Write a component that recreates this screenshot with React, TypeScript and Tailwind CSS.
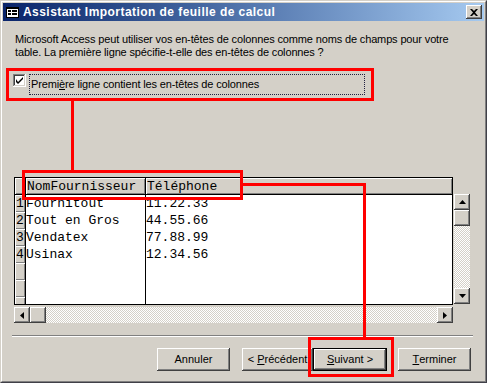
import React from "react";

const raised =
  "bg-[#d4d0c8] shadow-[inset_-1px_-1px_0_#404040,inset_1px_1px_0_#ffffff,inset_-2px_-2px_0_#808080,inset_2px_2px_0_#d4d0c8]";
const thinRaised = "bg-[#d4d0c8] shadow-[inset_1px_1px_0_#ffffff,inset_-1px_-1px_0_#808080]";
const track = "bg-[repeating-conic-gradient(#d4d0c8_0_25%,#ffffff_0_50%)] bg-[length:2px_2px]";

const rows = [
  ["Fournitout", "11.22.33"],
  ["Tout en Gros", "44.55.66"],
  ["Vendatex", "77.88.99"],
  ["Usinax", "12.34.56"],
];

function Arrow({ dir }: { dir: "up" | "down" | "left" | "right" }) {
  const pts = {
    up: "0,4 7,4 3.5,0",
    down: "0,0 7,0 3.5,4",
    left: "4,0 4,7 0,3.5",
    right: "0,0 0,7 4,3.5",
  }[dir];
  const v = dir === "up" || dir === "down";
  return (
    <svg width={v ? 7 : 4} height={v ? 4 : 7} viewBox={v ? "0 0 7 4" : "0 0 4 7"}>
      <polygon points={pts} fill="#000" />
    </svg>
  );
}

function Btn({ w, children, def }: { w: string; children: React.ReactNode; def?: boolean }) {
  return (
    <div className={`${w} h-[23px] ${def ? "border border-black" : ""}`}>
      <div className={`${raised} h-full flex items-center justify-center`}>{children}</div>
    </div>
  );
}

export default function App() {
  return (
    <div className="relative w-[487px] h-[383px] bg-[#d4d0c8] border border-t-[#d4d0c8] border-l-[#d4d0c8] border-r-[#404048] border-b-[#404048] font-['Liberation_Sans',Arial,sans-serif] text-[11px] text-black overflow-hidden">
      <div className="h-full border border-t-white border-l-white border-r-[#808080] border-b-[#808080] p-px flex flex-col">
        {/* title bar */}
        <div className="h-[18px] flex items-center bg-linear-to-r from-[#0a246a] to-[#a6caf0]">
          <svg width="13" height="11" viewBox="0 0 13 11" className="ml-[3px]">
            <rect x="0.5" y="0.5" width="12" height="10" fill="#fff" stroke="#000" />
            <rect x="0" y="0" width="13" height="2" fill="#000" />
            <rect x="2" y="3" width="3" height="2" fill="#000" />
            <rect x="6" y="3" width="5" height="2" fill="#000" />
            <rect x="2" y="6" width="3" height="2" fill="#000" />
            <rect x="6" y="6" width="5" height="2" fill="#000" />
          </svg>
          <span className="ml-[4px] text-white font-bold text-[12px] tracking-[0.45px]">
            Assistant Importation de feuille de calcul
          </span>
          <div className={`${raised} ml-auto mr-[2px] w-[16px] h-[14px] flex items-center justify-center`}>
            <svg width="8" height="7" viewBox="0 0 8 7">
              <path d="M0 0h2l2 2 2-2h2L5 3.5 8 7H6L4 5 2 7H0l3-3.5z" fill="#000" />
            </svg>
          </div>
        </div>

        {/* client */}
        <div className="flex-1 flex flex-col">
          <p className="mt-[12px] ml-[12px] leading-[13px] tracking-[-0.14px]">
            Microsoft Access peut utiliser vos en-têtes de colonnes comme noms de champs pour votre
            <br />
            table. La première ligne spécifie-t-elle des en-têtes de colonnes ?
          </p>

          <div className="mt-[15px] ml-[10px] flex items-start">
            <div className="w-[13px] h-[13px] bg-white shadow-[inset_-1px_-1px_0_#ffffff,inset_1px_1px_0_#808080,inset_-2px_-2px_0_#d4d0c8,inset_2px_2px_0_#404040] flex items-center justify-center">
              <svg width="7" height="7" viewBox="0 0 7 7">
                <path d="M0 2v3l2 2 5-5V-0L2 5z" fill="#000" />
              </svg>
            </div>
            <div className="ml-[3px] w-[336px] h-[21px] border border-dotted border-[#202040] pl-px flex items-center tracking-[-0.14px]">
              <span>
                Premi<span className="underline">è</span>re ligne contient les en-têtes de colonnes
              </span>
            </div>
          </div>

          {/* grid */}
          <div className="mt-[82px] ml-[11px] flex items-start">
            <div className="w-[439px] h-[128px] border border-black bg-white flex font-['Liberation_Mono','Courier_New',monospace] text-[13px] leading-[17px] overflow-hidden">
              <div className="w-[11px] border-r border-black flex flex-col shrink-0">
                <div className={`${thinRaised} h-[17px] border-b border-black shrink-0`} />
                {[1, 2, 3, 4, 5, 6, 7].map((n) => (
                  <div key={n} className={`${thinRaised} h-[17px] shrink-0 flex items-center justify-center`}>
                    {n <= 4 ? n : ""}
                  </div>
                ))}
              </div>
              <div className="w-[120px] border-r border-black flex flex-col shrink-0">
                <div className={`${thinRaised} h-[17px] border-b border-black pl-px shrink-0`}>NomFournisseur</div>
                {rows.map((r) => (
                  <div key={r[0]} className="h-[17px] whitespace-pre shrink-0">
                    {r[0]}
                  </div>
                ))}
              </div>
              <div className="flex-1 flex flex-col">
                <div className={`${thinRaised} h-[17px] border-b border-black pl-px shrink-0`}>Téléphone</div>
                {rows.map((r) => (
                  <div key={r[1]} className="h-[17px] shrink-0">
                    {r[1]}
                  </div>
                ))}
              </div>
            </div>

            <div className="ml-px mt-[17px] w-[16px] h-[110px] flex flex-col">
              <div className={`${raised} h-[16px] flex items-center justify-center`}>
                <Arrow dir="up" />
              </div>
              <div className={`${raised} h-[16px]`} />
              <div className={`${track} flex-1`} />
              <div className={`${raised} h-[16px] flex items-center justify-center`}>
                <Arrow dir="down" />
              </div>
            </div>
          </div>

          <div className="mt-[2px] ml-[11px] w-[439px] h-[16px] flex">
            <div className={`${raised} w-[16px] flex items-center justify-center`}>
              <Arrow dir="left" />
            </div>
            <div className={`${raised} w-[16px]`} />
            <div className={`${track} flex-1`} />
            <div className={`${raised} w-[16px] flex items-center justify-center`}>
              <Arrow dir="right" />
            </div>
          </div>

          <div className="mt-[12px] ml-[9px] w-[461px]">
            <div className="h-px bg-[#808080]" />
            <div className="h-px bg-white" />
          </div>

          <div className="mt-[11px] ml-[154px] flex">
            <Btn w="w-[73px]">Annuler</Btn>
            <div className="ml-[12px]">
              <Btn w="w-[71px]">
                &lt;&nbsp;<span className="underline">P</span>récédent
              </Btn>
            </div>
            <Btn w="w-[74px]" def>
              <span className="underline">S</span>uivant &gt;
            </Btn>
            <div className="ml-[11px]">
              <Btn w="w-[73px]">
                <span className="underline">T</span>erminer
              </Btn>
            </div>
          </div>
        </div>
      </div>

      {/* red annotations */}
      <div className="absolute left-[5px] top-[67px] w-[368px] h-[33px] border-[3px] border-[#ff0000]" />
      <div className="absolute left-[70px] top-[99px] w-[3px] h-[71px] bg-[#ff0000]" />
      <div className="absolute left-[21px] top-[169px] w-[221px] h-[30px] border-[3px] border-[#ff0000]" />
      <div className="absolute left-[241px] top-[182px] w-[124px] h-[3px] bg-[#ff0000]" />
      <div className="absolute left-[362px] top-[182px] w-[3px] h-[155px] bg-[#ff0000]" />
      <div className="absolute left-[307px] top-[336px] w-[86px] h-[40px] border-[3px] border-[#ff0000]" />
    </div>
  );
}
